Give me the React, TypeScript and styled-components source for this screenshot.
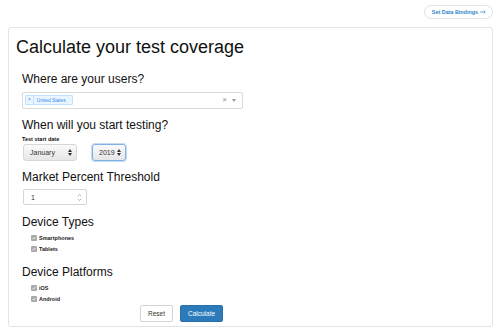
import styled, { createGlobalStyle } from "styled-components";

const GlobalStyle = createGlobalStyle`
	body {
		margin: 0;
		background: #ffffff;
		font-family: "Liberation Sans", Arial, sans-serif;
		color: #111;
	}
`;

const ArrowsIcon = () => (
	<svg width="4" height="7" viewBox="0 0 4 7">
		<path d="M0 3 L2 0 L4 3 Z M0 4 L2 7 L4 4 Z" fill="#333" />
	</svg>
);

const SpinIcon = () => (
	<svg width="5" height="9" viewBox="0 0 5 9">
		<path d="M0.8 3.2 L2.5 1.4 L4.2 3.2 M0.8 5.8 L2.5 7.6 L4.2 5.8" fill="none" stroke="#999" strokeWidth="0.7" />
	</svg>
);

const CheckIcon = () => (
	<svg width="4" height="4" viewBox="0 0 4 4">
		<path d="M0.6 2.1 L1.6 3.1 L3.4 0.9" fill="none" stroke="#fff" strokeWidth="0.8" />
	</svg>
);

const RightArrow = () => (
	<svg width="6" height="4" viewBox="0 0 6 4">
		<path d="M0 2 H5 M3.6 0.7 L5.2 2 L3.6 3.3" fill="none" stroke="#2f86c9" strokeWidth="0.7" />
	</svg>
);

export default function App() {
	const types = ["Smartphones", "Tablets"];
	const platforms = ["iOS", "Android"];

	return (
		<>
			<GlobalStyle />
			<TopBar>
				<BindingsButton>
					Set Data Bindings
					<RightArrow />
				</BindingsButton>
			</TopBar>
			<Card>
				<Title>Calculate your test coverage</Title>
				<Form>
					<Heading>Where are your users?</Heading>
					<MultiSelect>
						<Tag>
							<TagRemove>×</TagRemove>
							<TagLabel>United States</TagLabel>
						</Tag>
						<SelectControls>
							<ClearMark>×</ClearMark>
							<Caret />
						</SelectControls>
					</MultiSelect>

					<Heading $top={8.5}>When will you start testing?</Heading>
					<FieldLabel>Test start date</FieldLabel>
					<DateRow>
						<DateSelect $width={54}>
							January
							<ArrowsIcon />
						</DateSelect>
						<DateSelect $width={34} $focused>
							2019
							<ArrowsIcon />
						</DateSelect>
					</DateRow>

					<Heading $top={7.5}>Market Percent Threshold</Heading>
					<NumberBox>
						1
						<SpinIcon />
					</NumberBox>

					<Heading $top={8.5}>Device Types</Heading>
					<CheckList>
						{types.map((t) => (
							<CheckRow key={t}>
								<CheckBox>
									<CheckIcon />
								</CheckBox>
								{t}
							</CheckRow>
						))}
					</CheckList>

					<Heading $top={9}>Device Platforms</Heading>
					<CheckList>
						{platforms.map((p) => (
							<CheckRow key={p}>
								<CheckBox>
									<CheckIcon />
								</CheckBox>
								{p}
							</CheckRow>
						))}
					</CheckList>

					<Actions>
						<Button>Reset</Button>
						<Button $primary>Calculate</Button>
					</Actions>
				</Form>
			</Card>
		</>
	);
}

const TopBar = styled.div`
	display: flex;
	justify-content: flex-end;
	padding: 5px 6px 8px;
`;

const BindingsButton = styled.button`
	height: 14px;
	padding: 0 6px 0 7px;
	display: flex;
	align-items: center;
	gap: 2px;
	border: 1px solid #dde3ea;
	border-radius: 8px;
	background: #fff;
	color: #2f86c9;
	font-family: inherit;
	font-size: 5.4px;
	font-weight: 600;
`;

const Card = styled.div`
	margin: 0 6px 0 8px;
	padding: 7px 7px 4px;
	border: 1px solid #e4e4e4;
	border-radius: 3px;
	background: #fff;
`;

const Title = styled.h1`
	margin: 0;
	font-size: 18px;
	font-weight: 400;
	line-height: 24px;
	color: #111;
`;

const Form = styled.div`
	display: flex;
	flex-direction: column;
	align-items: flex-start;
	padding-left: 6px;
`;

const Heading = styled.h2<{ $top?: number }>`
	margin: ${(p) => p.$top ?? 12}px 0 0;
	font-size: 12px;
	font-weight: 400;
	line-height: 16px;
	color: #111;
`;

const MultiSelect = styled.div`
	margin-top: 4.5px;
	width: 221px;
	height: 17px;
	box-sizing: border-box;
	padding: 0 6px 0 2px;
	display: flex;
	align-items: center;
	justify-content: space-between;
	border: 1px solid #d9d9d9;
	border-radius: 2px;
	background: #fff;
`;

const Tag = styled.div`
	display: flex;
	align-items: center;
	height: 10px;
	box-sizing: border-box;
	border: 1px solid #c2e0ff;
	border-radius: 1px;
	background: #ebf5ff;
	color: #2d8cf0;
	font-size: 4.8px;
`;

const TagRemove = styled.span`
	padding: 0 2px;
	border-right: 1px solid #c2e0ff;
	line-height: 8px;
`;

const TagLabel = styled.span`
	padding: 0 6px 0 3px;
`;

const SelectControls = styled.div`
	display: flex;
	align-items: center;
	gap: 5px;
`;

const ClearMark = styled.span`
	color: #888;
	font-size: 8px;
	line-height: 8px;
`;

const Caret = styled.span`
	width: 0;
	height: 0;
	border-left: 2.5px solid transparent;
	border-right: 2.5px solid transparent;
	border-top: 3px solid #999;
`;

const FieldLabel = styled.div`
	margin-top: 3px;
	font-size: 5.5px;
	font-weight: 700;
	line-height: 7px;
`;

const DateRow = styled.div`
	display: flex;
	gap: 15px;
	margin: 1px 0 0 1px;
`;

const DateSelect = styled.div<{ $width: number; $focused?: boolean }>`
	width: ${(p) => p.$width}px;
	height: 17px;
	box-sizing: border-box;
	padding: 0 4px 0 6px;
	display: flex;
	align-items: center;
	justify-content: space-between;
	border: 1px solid ${(p) => (p.$focused ? "#7fb1e3" : "#d6d6d6")};
	box-shadow: ${(p) => (p.$focused ? "0 0 0 1px #c6dcf3" : "none")};
	border-radius: 3px;
	background: linear-gradient(#fafafa, #e6e6e6);
	font-size: 7px;
	color: #333;
`;

const NumberBox = styled.div`
	margin: 4.5px 0 0 1px;
	width: 64px;
	height: 16px;
	box-sizing: border-box;
	padding: 0 4px 0 7px;
	display: flex;
	align-items: center;
	justify-content: space-between;
	border: 1px solid #d6d6d6;
	border-radius: 2px;
	font-size: 7px;
	color: #333;
`;

const CheckList = styled.div`
	display: flex;
	flex-direction: column;
	padding: 3px 0 0 9px;
`;

const CheckRow = styled.div`
	display: flex;
	align-items: center;
	gap: 2px;
	height: 11px;
	font-size: 5.5px;
	font-weight: 700;
	color: #222;
`;

const CheckBox = styled.span`
	width: 6px;
	height: 6px;
	display: flex;
	align-items: center;
	justify-content: center;
	border-radius: 1px;
	background: #a9a9a9;
`;

const Actions = styled.div`
	display: flex;
	gap: 7px;
	margin: 0.5px 0 0 118px;
`;

const Button = styled.button<{ $primary?: boolean }>`
	height: 17px;
	padding: 0 7px;
	border: 1px solid ${(p) => (p.$primary ? "#2a6fa8" : "#d4d4d4")};
	border-radius: 2px;
	background: ${(p) => (p.$primary ? "#2b7bbb" : "#fff")};
	color: ${(p) => (p.$primary ? "#fff" : "#333")};
	font-family: inherit;
	font-size: 6.5px;
`;
